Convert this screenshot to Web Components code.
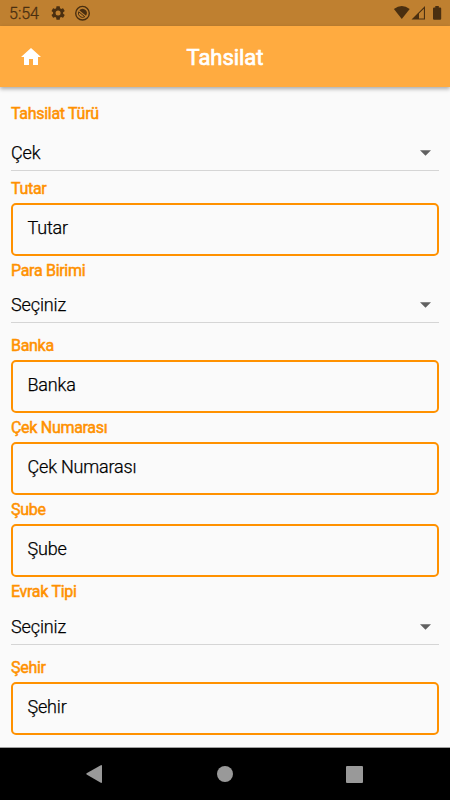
<!DOCTYPE html>
<html lang="tr">
<head>
<meta charset="utf-8">
<title>Tahsilat</title>
<style>
html,body{margin:0;height:100%;background:#fafafa;font-family:Roboto,"Liberation Sans",sans-serif;overflow:hidden}
</style>
</head>
<body>
<payment-screen></payment-screen>
<script>
function element(name, html) {
  const t = document.createElement('template');
  t.innerHTML = html;
  customElements.define(name, class extends HTMLElement {
    constructor() {
      super();
      this.attachShadow({mode: 'open'}).appendChild(t.content.cloneNode(true));
    }
  });
}

element('status-bar', `
<style>
:host{display:flex;align-items:center;box-sizing:border-box;height:26px;padding:0 8px 0 9px;background:#bf8030;color:#4a2f10}
.time{font-size:16px;width:41px;padding-top:2px;height:24px;line-height:24px;font-weight:300;-webkit-text-stroke:.3px #4a2f10}
svg{display:block;flex:none}
.end{margin-left:auto}
</style>
<span class="time">5:54</span>
<svg width="46" height="26" viewBox="50 0 46 26" fill="#4a2f10">
  <path transform="translate(49.700,4.600) scale(.7)" d="M19.14 12.94c.04-.3.06-.61.06-.94s-.02-.64-.07-.94l2.03-1.58a.49.49 0 0 0 .12-.61l-1.92-3.32a.49.49 0 0 0-.59-.22l-2.39.96c-.5-.38-1.03-.7-1.62-.94l-.36-2.54a.48.48 0 0 0-.48-.41h-3.84c-.24 0-.43.17-.47.41l-.36 2.54c-.59.24-1.13.57-1.62.94l-2.39-.96a.48.48 0 0 0-.59.22L2.74 8.87a.48.48 0 0 0 .12.61l2.03 1.58c-.05.3-.09.63-.09.94s.02.64.07.94l-2.03 1.58a.49.49 0 0 0-.12.61l1.92 3.32c.12.22.37.29.59.22l2.39-.96c.5.38 1.03.7 1.62.94l.36 2.54c.05.24.24.41.48.41h3.84c.24 0 .44-.17.47-.41l.36-2.54c.59-.24 1.13-.56 1.62-.94l2.39.96c.22.08.47 0 .59-.22l1.92-3.32a.48.48 0 0 0-.12-.61zM12 15.6a3.6 3.6 0 1 1 0-7.2 3.6 3.6 0 0 1 0 7.2z"/>
  <circle cx="82.5" cy="13.200" r="6.800" fill="none" stroke="#4a2f10" stroke-width="1.400"/>
  <path d="M79.300 10.300A4.300 4.300 0 0 1 86.600 14.600L86 15.800Z"/>
  <path d="M78.700 11.800A4.100 4.100 0 0 0 84.800 16.700Z" fill="none" stroke="#4a2f10" stroke-width="1"/>
</svg>
<svg class="end" width="50" height="26" viewBox="392 0 50 26" fill="#4a2f10">
  <path d="M393.900 8.900Q401.800 2.900 409.700 8.900L401.800 19Z"/>
  <path fill-rule="evenodd" d="M425 6V19.600H411.500ZM423.900 8.700L419 13.600V18.500H423.900Z"/>
  <path d="M435.300 6H438.800V7.400H440.100Q441.200 7.400 441.200 8.500V18.700Q441.200 19.800 440.100 19.800H434.100Q433 19.800 433 18.700V8.500Q433 7.400 434.100 7.400H435.300Z"/>
</svg>`);

element('app-bar', `
<style>
:host{display:grid;grid-template-columns:60px 1fr 60px;align-items:center;height:61px;background:#ffab40;color:#fff;box-shadow:0 2px 4px rgba(0,0,0,.32)}
svg{display:block;margin-left:19px}
h1{margin:0;padding-top:2px;text-align:center;font-size:22px;font-weight:400;line-height:28px;letter-spacing:-.05px;-webkit-text-stroke:.7px #fff}
</style>
<svg width="24" height="24" viewBox="0 0 24 24" fill="#fff"><path d="M10 20v-6h4v6h5v-8h3L12 3 2 12h3v8z"/></svg>
<h1><slot></slot></h1>`);

element('form-field', `
<style>
:host{display:flex;flex-direction:column}
.label{height:20px;line-height:21px;font-size:16px;letter-spacing:-.3px;color:#ff9100;-webkit-text-stroke:.5px #ff9100;white-space:nowrap}
</style>
<div class="label"><slot name="label"></slot></div><slot></slot>`);

element('select-box', `
<style>
:host{display:flex;align-items:flex-end;justify-content:space-between;box-sizing:border-box;height:43px;border-bottom:1px solid #d5d5d5;color:#000;font-size:18px;font-weight:300;letter-spacing:-.12px;-webkit-text-stroke:.25px #000;line-height:22px;padding:0 8px 6px 0}
svg{display:block;margin-bottom:8px}
</style>
<span><slot></slot></span>
<svg width="11" height="6" viewBox="0 0 11 6"><path d="M0 .3H11L5.500 5.800Z" fill="#616161"/></svg>`);

element('text-box', `
<style>
:host{display:flex;align-items:center;box-sizing:border-box;height:53px;margin-top:5px;border:2px solid #ff9100;border-radius:5px;padding:0 15px 3px 14.500px;font-size:18px;font-weight:300;letter-spacing:-.18px;-webkit-text-stroke:.25px #000;line-height:22px;color:#000}
</style>
<slot></slot>`);

element('nav-bar', `
<style>
:host{display:flex;justify-content:space-between;align-items:center;box-sizing:border-box;height:53px;background:#000;border-top:1px solid #a0a0a0;padding:0 87px 0 86px}
svg{display:block}
.home{margin-left:1px}
</style>
<svg width="16" height="18" viewBox="0 0 16 18"><path d="M.6 8.300Q0 8.800 .6 9.400L14.800 17.800Q16 18.200 16 17V1Q16-.2 14.800.2Z" fill="#999"/></svg>
<svg class="home" width="16" height="16" viewBox="0 0 16 16"><circle cx="8" cy="8" r="8" fill="#999"/></svg>
<svg width="17" height="17" viewBox="0 0 17 17"><rect width="17" height="17" rx="1" fill="#999"/></svg>`);

element('payment-screen', `
<style>
:host{display:flex;flex-direction:column;height:800px;width:450px;background:#fafafa}
main{flex:1;padding:16px 11px 0;display:flex;flex-direction:column;gap:4px;min-height:0}
.first select-box{height:48px}
.first + form-field{margin-top:3px}
.after{margin-top:8px}
</style>
<status-bar></status-bar>
<app-bar>Tahsilat</app-bar>
<main>
<form-field class="first"><span slot="label">Tahsilat Türü</span><select-box>Çek</select-box></form-field>
<form-field><span slot="label">Tutar</span><text-box>Tutar</text-box></form-field>
<form-field><span slot="label">Para Birimi</span><select-box>Seçiniz</select-box></form-field>
<form-field class="after"><span slot="label">Banka</span><text-box>Banka</text-box></form-field>
<form-field><span slot="label">Çek Numarası</span><text-box>Çek Numarası</text-box></form-field>
<form-field><span slot="label">Şube</span><text-box>Şube</text-box></form-field>
<form-field><span slot="label">Evrak Tipi</span><select-box style="height:44px">Seçiniz</select-box></form-field>
<form-field class="after"><span slot="label">Şehir</span><text-box>Şehir</text-box></form-field>
</main>
<nav-bar></nav-bar>`);
</script>
</body>
</html>
